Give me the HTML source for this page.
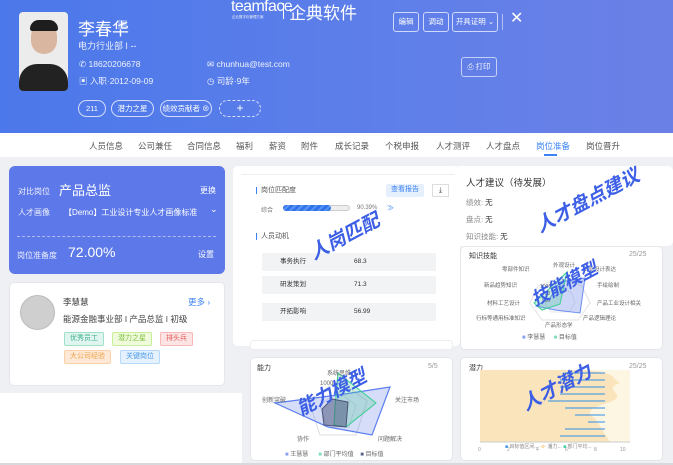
<!DOCTYPE html>
<html><head><meta charset="utf-8"><style>
*{margin:0;padding:0;box-sizing:border-box}
body{width:673px;height:465px;overflow:hidden;background:#eef0f3;font-family:"Liberation Sans","Noto Sans CJK SC",sans-serif;position:relative;color:#333}
.a{position:absolute}
.hdr{left:0;top:0;width:673px;height:133px;background:linear-gradient(90deg,#4b78ea,#5f7fe9 60%,#6b80e6)}
.w{color:#fff}
.btn{position:absolute;border:1px solid rgba(255,255,255,.7);border-radius:3px;color:#fff;font-size:7.5px;text-align:center;line-height:18px;height:20px;white-space:nowrap}
.tag{position:absolute;top:100px;height:17px;border:1px solid rgba(255,255,255,.75);border-radius:9px;color:#fff;font-size:7.5px;text-align:center;line-height:15px;white-space:nowrap}
.nav{left:0;top:133px;width:673px;height:24px;background:#fff;font-size:8.5px;color:#555}
.nav span{position:absolute;top:7px}
.card{background:#fff;border-radius:5px;border:1px solid #e4e6ea}
.wm{position:absolute;color:#3c5fe6;font-weight:bold;font-style:italic;transform:rotate(-28deg);white-space:nowrap;font-family:"Noto Sans CJK SC",sans-serif}
.lt{font-size:7px;color:#555}
.bt{position:absolute;height:14px;border-radius:2px;font-size:7px;line-height:12px;padding:0 5px}
.row{position:absolute;left:262px;width:174px;height:18px;background:#f2f3f5;font-size:6.5px;line-height:18px}
</style></head><body>
<div class="a hdr"></div>
<div class="a" style="left:19px;top:12px;width:49px;height:79px;border-radius:4px;background:#ececec;overflow:hidden">
 <div class="a" style="left:12px;top:12px;width:26px;height:30px;border-radius:12px 12px 13px 13px;background:#d9b6a0"></div>
 <div class="a" style="left:11px;top:8px;width:28px;height:11px;border-radius:12px 12px 3px 3px;background:#1d1d1d"></div>
 <div class="a" style="left:0;top:52px;width:49px;height:30px;border-radius:18px 18px 0 0;background:#222"></div>
</div>
<div class="a w" style="left:78px;top:15px;font-size:17px">李春华</div>
<div class="a" style="left:118px;top:20px;width:9px;height:9px;background:rgba(255,255,255,.3);color:#fff;font-size:7px;text-align:center;line-height:9px">♂</div>
<div class="a w" style="left:78px;top:39px;font-size:9px;opacity:.9">电力行业部 ǀ --</div>
<div class="a w" style="left:79px;top:59px;font-size:8.5px;opacity:.9">✆ 18620206678</div>
<div class="a w" style="left:207px;top:59px;font-size:8.5px;opacity:.9">✉ chunhua@test.com</div>
<div class="a w" style="left:79px;top:75px;font-size:8.5px;opacity:.9">▣ 入职·2012-09-09</div>
<div class="a w" style="left:207px;top:75px;font-size:8.5px;opacity:.9">◷ 司龄·9年</div>
<div class="tag" style="left:78px;width:28px">211</div>
<div class="tag" style="left:111px;width:43px">潜力之星</div>
<div class="tag" style="left:160px;width:52px">绩效贡献者 ⊗</div>
<div class="tag" style="left:219px;width:42px;border-style:dashed;font-size:12px;line-height:14px">+</div>
<div class="a w" style="left:231px;top:-1px;font-size:16px;letter-spacing:-.6px;line-height:16px">teamface</div>
<div class="a w" style="left:232px;top:15px;font-size:3.5px;opacity:.9;white-space:nowrap">企业数字化管理方案</div>
<div class="a" style="left:283px;top:3px;width:1px;height:16px;background:#fff"></div>
<div class="a w" style="left:289px;top:-1px;font-size:17px;white-space:nowrap">企典软件</div>
<div class="btn" style="left:393px;top:12px;width:26px">编辑</div>
<div class="btn" style="left:423px;top:12px;width:26px">调动</div>
<div class="btn" style="left:452px;top:12px;width:46px">开具证明 ⌄</div>
<div class="a" style="left:502px;top:14px;width:1px;height:16px;background:rgba(255,255,255,.5)"></div>
<div class="a w" style="left:510px;top:8px;font-size:16px">✕</div>
<div class="btn" style="left:461px;top:57px;width:36px;opacity:.9">⎙ 打印</div>
<div class="a nav">
<span style="left:89px">人员信息</span><span style="left:138px">公司兼任</span><span style="left:187px">合同信息</span><span style="left:236px">福利</span><span style="left:269px">薪资</span><span style="left:301px">附件</span><span style="left:335px">成长记录</span><span style="left:385px">个税申报</span><span style="left:436px">人才测评</span><span style="left:486px">人才盘点</span><span style="left:536px;color:#3b82f6">岗位准备</span><span style="left:586px">岗位晋升</span>
<div class="a" style="left:544px;top:21px;width:13px;height:2px;background:#3b82f6"></div>
</div>
<div class="a" style="left:9px;top:166px;width:216px;height:108px;background:#5d79e9;border-radius:6px;color:#fff">
 <div class="a" style="left:9px;top:20px;font-size:8px;opacity:.9">对比岗位</div>
 <div class="a" style="left:50px;top:14px;font-size:13px">产品总监</div>
 <div class="a" style="left:191px;top:19px;font-size:8px">更换</div>
 <div class="a" style="left:9px;top:41px;font-size:8px;opacity:.9">人才画像</div>
 <div class="a" style="left:55px;top:41px;font-size:8px">【Demo】工业设计专业人才画像标准</div>
 <div class="a" style="left:201px;top:38px;font-size:9px">⌄</div>
 <div class="a" style="left:8px;top:70px;width:199px;border-top:1px dashed rgba(255,255,255,.5)"></div>
 <div class="a" style="left:8px;top:84px;font-size:8px;opacity:.9">岗位准备度</div>
 <div class="a" style="left:59px;top:78px;font-size:14px">72.00%</div>
 <div class="a" style="left:189px;top:83px;font-size:8px">设置</div>
</div>
<div class="a card" style="left:9px;top:282px;width:216px;height:104px"></div>
<div class="a" style="left:20px;top:295px;width:35px;height:35px;border-radius:50%;background:#cfcfcf;border:1px solid #bbb"></div>
<div class="a" style="left:63px;top:296px;font-size:8.5px">李慧慧</div>
<div class="a" style="left:188px;top:296px;font-size:8.5px;color:#3b82f6">更多 ›</div>
<div class="a" style="left:63px;top:313px;font-size:8.5px;color:#444">能源金融事业部 ǀ 产品总监 ǀ 初级</div>
<div class="bt a" style="left:64px;top:332px;background:#e0f5ef;border:1px solid #9fe0cb;color:#3bb08a">优秀员工</div>
<div class="bt a" style="left:112px;top:332px;background:#f0fbdc;border:1px solid #c8ee9a;color:#7cc23c">潜力之星</div>
<div class="bt a" style="left:160px;top:332px;background:#fde4e4;border:1px solid #f5b7b7;color:#e35a5a">排头兵</div>
<div class="bt a" style="left:64px;top:350px;background:#fde9d5;border:1px solid #fbd1a9;color:#f0a24a">大公司经验</div>
<div class="bt a" style="left:120px;top:350px;background:#e5f1fd;border:1px solid #b6d8fb;color:#4a98ea">关键岗位</div>
<div class="a" style="left:0;top:393px;width:242px;height:70px;background:#fff"></div>
<div class="a" style="left:0;top:463px;width:673px;height:2px;background:#d8d9dc"></div>
<div class="a" style="left:233px;top:166px;width:227px;height:180px;background:#fff;border-radius:5px"></div>
<div class="a" style="left:241px;top:174px;width:216px;height:1px;background:#eee"></div>
<div class="a" style="left:256px;top:187px;width:1px;height:7px;background:#3b82f6"></div>
<div class="a lt" style="left:261px;top:185px">岗位匹配度</div>
<div class="bt a" style="left:386px;top:184px;background:#e6f0fd;color:#3b82f6;height:13px">查看报告</div>
<div class="a" style="left:432px;top:184px;width:17px;height:13px;border:1px solid #ddd;font-size:7px;text-align:center;line-height:11px">⤓</div>
<div class="a" style="left:261px;top:205px;font-size:6px;color:#777">综合</div>
<div class="a" style="left:283px;top:205px;width:67px;height:6px;border-radius:3px;background:#eee;border:1px solid #ccc"></div>
<div class="a" style="left:283px;top:205px;width:48px;height:6px;border-radius:3px;background:repeating-linear-gradient(135deg,#2f74ec 0 3px,#5b95f2 3px 5px)"></div>
<div class="a" style="left:357px;top:205px;font-size:6px;color:#777">90.39%</div>
<div class="a" style="left:387px;top:203px;font-size:7px;color:#3b82f6">≫</div>
<div class="a" style="left:256px;top:233px;width:1px;height:7px;background:#3b82f6"></div>
<div class="a lt" style="left:261px;top:231px">人员动机</div>
<div class="row" style="top:253px"><span style="margin-left:18px">事务执行</span><span style="position:absolute;left:92px">68.3</span></div>
<div class="row" style="top:276px"><span style="margin-left:18px">研发策划</span><span style="position:absolute;left:92px">71.3</span></div>
<div class="row" style="top:303px"><span style="margin-left:18px">开拓影响</span><span style="position:absolute;left:92px">56.99</span></div>
<div class="a" style="left:250px;top:340px;width:203px;height:10px;background:#fff;border:1px solid #eee;border-radius:3px"></div>
<div class="a card" style="left:250px;top:357px;width:203px;height:104px"></div>
<div class="a lt" style="left:257px;top:363px;color:#333">能力</div>
<div class="a lt" style="left:428px;top:363px;color:#999">5/5</div>
<svg class="a" style="left:250px;top:365px" width="203" height="80">
<polygon points="88,15 117,36 106,70 70,70 59,36" fill="none" stroke="#ddd"/>
<polygon points="88,27 106,40 99,62 77,62 70,40" fill="none" stroke="#e5e5e5"/>
<polygon points="88,30 140,22 122,70 78,62 25,38" fill="rgba(90,120,230,.25)" stroke="#5b7ff0" stroke-width="1.2"/>
<polygon points="88,8 126,38 96,62 84,60 85,42" fill="rgba(60,200,140,.25)" stroke="#3ecf95" stroke-width="1.1"/>
<polygon points="82,34 98,37 96,62 74,60 72,44" fill="rgba(70,80,120,.5)" stroke="#4a5478"/>
<text x="77" y="10" font-size="6" fill="#666">系统思维</text><text x="70" y="20" font-size="6" fill="#666">1000</text>
<text x="12" y="37" font-size="6" fill="#666">创新突破</text><text x="145" y="37" font-size="6" fill="#666">关注市场</text>
<text x="47" y="76" font-size="6" fill="#666">协作</text><text x="128" y="76" font-size="6" fill="#666">问题解决</text>
</svg>
<div class="a" style="left:285px;top:449px;font-size:6px;color:#666;white-space:nowrap"><span style="color:#88a2f2">■</span> 王慧慧 &nbsp;&nbsp;&nbsp;&nbsp; <span style="color:#7fe0b8">■</span> 部门平均值 &nbsp;&nbsp; <span style="color:#5a6488">■</span> 目标值</div>
<div class="a" style="left:455px;top:166px;width:218px;height:80px;background:#fff;border-radius:5px"></div>
<div class="a" style="left:466px;top:175px;font-size:9.5px">人才建议（待发展）</div>
<div class="a" style="left:466px;top:197px;font-size:7.5px;color:#888">绩效: <span style="color:#333">无</span></div>
<div class="a" style="left:466px;top:214px;font-size:7.5px;color:#888">盘点: <span style="color:#333">无</span></div>
<div class="a" style="left:466px;top:231px;font-size:7.5px;color:#888">知识技能: <span style="color:#333">无</span></div>
<div class="a card" style="left:460px;top:246px;width:203px;height:104px"></div>
<div class="a lt" style="left:469px;top:251px;color:#333">知识技能</div>
<div class="a lt" style="left:629px;top:251px;color:#999">25/25</div>
<svg class="a" style="left:460px;top:258px" width="203" height="72">
<polygon points="100,20 122,28 130,45 118,62 82,62 70,45 78,28" fill="none" stroke="#e2e2e2"/>
<polygon points="100,30 111,34 115,45 109,54 91,54 85,45 89,34" fill="none" stroke="#e8e8e8"/>
<polygon points="100,24 125,20 120,55 95,52 76,48 90,40" fill="rgba(90,120,230,.3)" stroke="#6b8ef0"/>
<polygon points="107,14 100,46 82,52 74,45" fill="rgba(60,200,140,.25)" stroke="#3ecf95"/>
<g font-size="5.5" fill="#666">
<text x="42" y="13">零部件知识</text><text x="93" y="9">外观设计</text><text x="123" y="13">工业设计表达</text>
<text x="24" y="29">新品趋势知识</text><text x="137" y="29">手绘绘制</text>
<text x="27" y="47">材料工艺设计</text><text x="137" y="47">产品工业设计相关</text>
<text x="16" y="62">行标等通用标准知识</text><text x="123" y="62">产品逻辑理论</text>
<text x="85" y="69">产品形态学</text></g>
<g font-size="5" fill="#666"><text x="80" y="30">1000</text><text x="82" y="37">750</text><text x="82" y="44">500</text></g>
</svg>
<div class="a" style="left:522px;top:332px;font-size:6px;color:#666;white-space:nowrap"><span style="color:#88a2f2">■</span> 李慧慧 &nbsp;&nbsp;&nbsp; <span style="color:#7fe0b8">■</span> 目标值</div>
<div class="a card" style="left:460px;top:357px;width:203px;height:104px"></div>
<div class="a lt" style="left:469px;top:363px;color:#333">潜力</div>
<div class="a lt" style="left:629px;top:363px;color:#999">25/25</div>
<svg class="a" style="left:460px;top:368px" width="203" height="92">
<rect x="20" y="2" width="150" height="72" fill="#fdf6e3"/>
<path d="M20,2 L120,2 C160,4 150,10 160,15 C140,22 170,26 150,34 C130,40 125,45 135,50 L140,58 L150,74 L20,74Z" fill="#f8d9a0" opacity=".6"/>
<line x1="20" y1="74" x2="170" y2="74" stroke="#ccc"/>
<g stroke="#2f8fe8" stroke-width="1" fill="#2f8fe8">
<line x1="105" y1="5" x2="145" y2="5"/><line x1="100" y1="12" x2="145" y2="12"/><line x1="100" y1="19" x2="145" y2="19"/><line x1="100" y1="26" x2="145" y2="26"/><line x1="88" y1="33" x2="145" y2="33"/><line x1="105" y1="40" x2="145" y2="40"/><line x1="115" y1="47" x2="145" y2="47"/><line x1="128" y1="54" x2="145" y2="54"/><line x1="105" y1="61" x2="145" y2="61"/><line x1="100" y1="68" x2="145" y2="68"/>
</g>
<g font-size="5" fill="#999"><text x="18" y="83">0</text><text x="47" y="83">2</text><text x="76" y="83">4</text><text x="105" y="83">6</text><text x="134" y="83">8</text><text x="160" y="83">10</text></g>
</svg>
<div class="a" style="left:505px;top:443px;font-size:5px;color:#888;white-space:nowrap"><span style="color:#2f8fe8">■</span> 目标值区间... <span style="color:#f0b040">-o-</span> 潘力... <span style="color:#2ecfa0">■</span> 部门平均...</div>
<div class="wm" style="left:306px;top:222px;font-size:19px">人岗匹配</div>
<div class="wm" style="left:530px;top:186px;font-size:19px">人才盘点建议</div>
<div class="wm" style="left:528px;top:270px;font-size:18px">技能模型</div>
<div class="wm" style="left:293px;top:378px;font-size:19px">能力模型</div>
<div class="wm" style="left:518px;top:373px;font-size:19px">人才潜力</div>
</body></html>
